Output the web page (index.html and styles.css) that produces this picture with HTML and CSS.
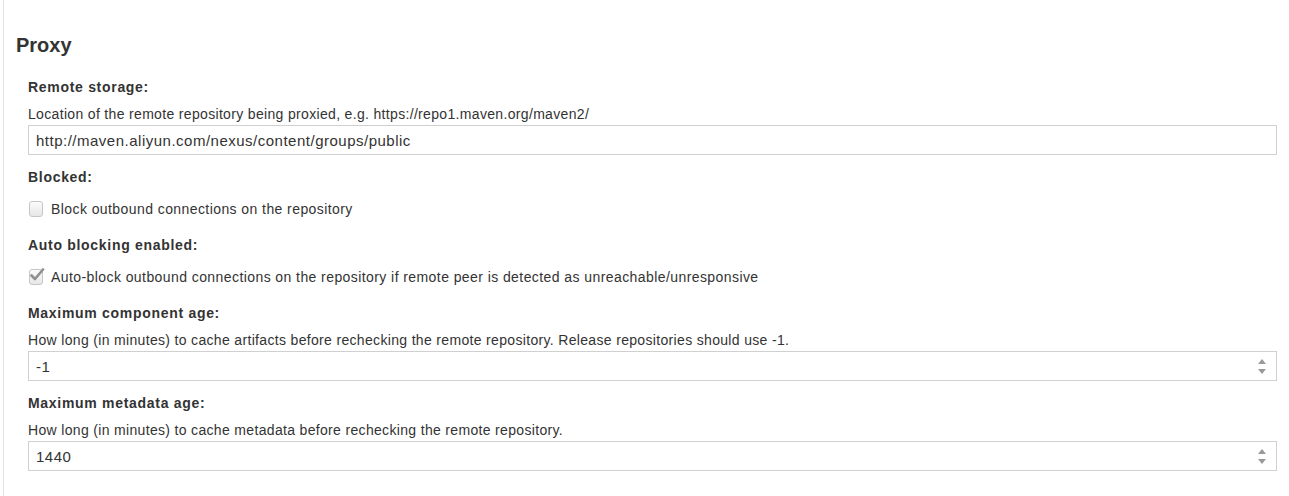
FILE: index.html
```html
<!DOCTYPE html>
<html>
<head>
<meta charset="utf-8">
<link rel="stylesheet" href="styles.css">
</head>
<body>
<div class="panel">
  <h2 class="title">Proxy</h2>
  <div class="fields">
    <div class="field">
      <div class="label">Remote storage:</div>
      <div class="help">Location of the remote repository being proxied, e.g. https://repo1.maven.org/maven2/</div>
      <div class="input">http://maven.aliyun.com/nexus/content/groups/public</div>
    </div>
    <div class="field">
      <div class="label">Blocked:</div>
      <div class="check-row"><span class="box"></span><span>Block outbound connections on the repository</span></div>
    </div>
    <div class="field">
      <div class="label">Auto blocking enabled:</div>
      <div class="check-row"><span class="box checked"><svg width="16" height="14" viewBox="0 0 16 14"><path d="M2.5 7.5 L6 11 L14 1.5" fill="none" stroke="#8f8f8f" stroke-width="2.6" stroke-linecap="round" stroke-linejoin="round"/></svg></span><span>Auto-block outbound connections on the repository if remote peer is detected as unreachable/unresponsive</span></div>
    </div>
    <div class="field">
      <div class="label">Maximum component age:</div>
      <div class="help">How long (in minutes) to cache artifacts before rechecking the remote repository. Release repositories should use -1.</div>
      <div class="input spin"><span>-1</span><span class="arrows"><i class="up"></i><i class="down"></i></span></div>
    </div>
    <div class="field">
      <div class="label">Maximum metadata age:</div>
      <div class="help">How long (in minutes) to cache metadata before rechecking the remote repository.</div>
      <div class="input spin"><span>1440</span><span class="arrows"><i class="up"></i><i class="down"></i></span></div>
    </div>
  </div>
</div>
</body>
</html>
```
FILE: styles.css
```css
html, body {
  margin: 0;
  padding: 0;
  background: #fff;
}
body {
  font-family: "Liberation Sans", Arial, sans-serif;
  color: #333;
  font-size: 14px;
  letter-spacing: 0.36px;
}
.panel {
  margin-left: 3px;
  border-left: 1px solid #e2e2e2;
  height: 496px;
  box-sizing: border-box;
  padding: 30px 12px 0 12px;
}
.title {
  margin: 0;
  font-size: 20px;
  font-weight: bold;
  line-height: 30px;
  letter-spacing: 0;
  color: #333;
}
.fields {
  padding: 18px 0 0 12px;
  display: flex;
  flex-direction: column;
}
.field {
  display: flex;
  flex-direction: column;
  margin-bottom: 13px;
}
.label {
  font-weight: bold;
  font-size: 14px;
  line-height: 18px;
  letter-spacing: 0.7px;
  margin-bottom: 10px;
}
.help {
  line-height: 16px;
  margin-bottom: 3px;
  letter-spacing: 0.33px;
}
.input {
  height: 30px;
  box-sizing: border-box;
  border: 1px solid #d0d0d0;
  padding: 0 7px;
  display: flex;
  align-items: center;
  justify-content: space-between;
  font-size: 15px;
  letter-spacing: 0.5px;
}
.check-row {
  display: flex;
  align-items: center;
  height: 18px;
  margin-top: 4px;
  margin-bottom: 5px;
  letter-spacing: 0.42px;
}
.box {
  width: 14px;
  height: 16px;
  box-sizing: border-box;
  border: 1px solid #c6c6c6;
  border-radius: 3px;
  background: linear-gradient(#fbfbfb, #e6e6e6);
  margin: 0 8px 0 1px;
  position: relative;
  flex: none;
}
.box svg {
  position: absolute;
  left: -1px;
  top: -2px;
}
.arrows {
  display: flex;
  flex-direction: column;
  gap: 5px;
  margin-right: 3px;
}
.arrows i {
  display: block;
  width: 0;
  height: 0;
  border-left: 4px solid transparent;
  border-right: 4px solid transparent;
}
.arrows .up {
  border-bottom: 5px solid #9a9a9a;
}
.arrows .down {
  border-top: 5px solid #9a9a9a;
}
```
